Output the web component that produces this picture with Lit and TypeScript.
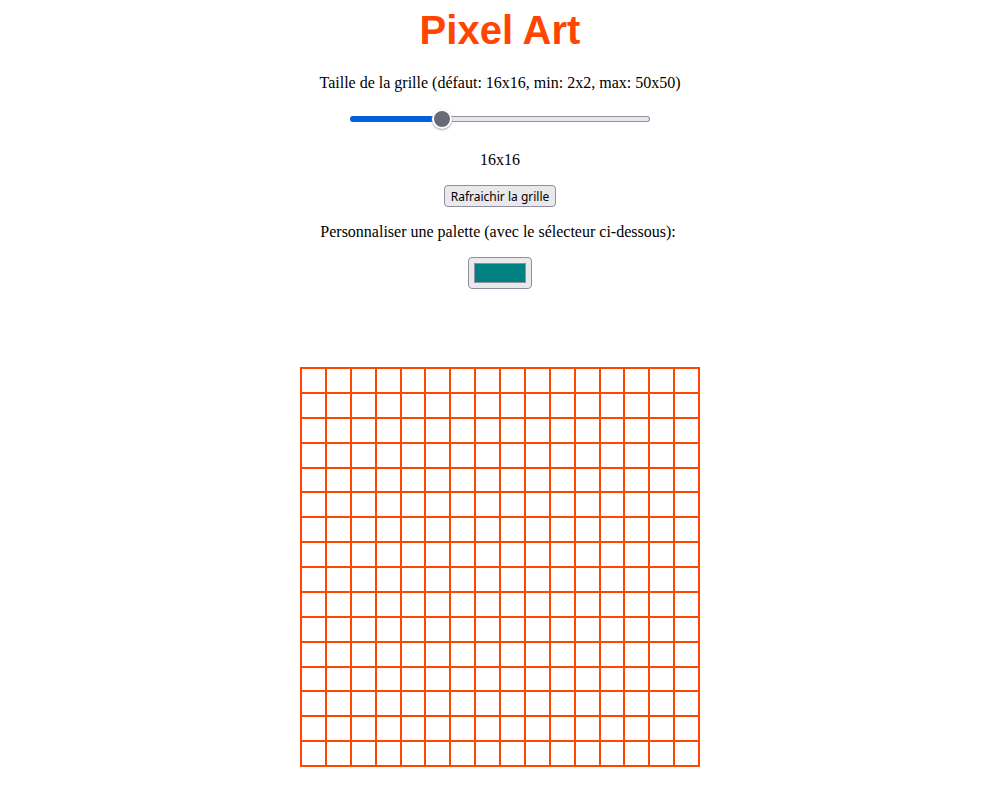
import { LitElement, html, css } from "lit";
import { customElement, state } from "lit/decorators.js";

@customElement("app-root")
export class AppRoot extends LitElement {
  static styles = css`
    :host {
      display: block;
      background: #fff;
      color: #000;
      font: 16px/18px "Liberation Serif", "Times New Roman", serif;
      text-align: center;
    }
    main {
      display: flex;
      flex-direction: column;
      align-items: center;
      padding: 8px 8px 20px;
    }
    h1 {
      margin: 0;
      font: bold 40px/44px "Liberation Sans", Arial, sans-serif;
      color: #ff4500;
    }
    .size-label { margin-top: 22px; }
    .slider {
      appearance: none;
      width: 300px;
      max-width: 100%;
      height: 20px;
      margin: 17px 0 0;
      background: transparent;
    }
    .slider::-webkit-slider-runnable-track {
      box-sizing: border-box;
      height: 6px;
      border: 1px solid transparent;
      border-radius: 3px;
      background:
        linear-gradient(#0060df, #0060df) 0 0 / var(--fill) 100% no-repeat border-box,
        linear-gradient(#e9e9ed, #e9e9ed) padding-box,
        linear-gradient(#8f8f9d, #8f8f9d) border-box;
    }
    .slider::-webkit-slider-thumb {
      appearance: none;
      box-sizing: border-box;
      width: 20px;
      height: 20px;
      margin-top: -8px;
      border: 2px solid #fff;
      border-radius: 50%;
      background: #6a6a77;
      box-shadow: 0 1px 2px #b09aa5;
    }
    .size-value { margin-top: 22px; }
    .refresh {
      box-sizing: border-box;
      height: 22px;
      margin: 16px 0 0;
      padding: 1px 6px 0;
      border: 1px solid #8f8f9d;
      border-radius: 4px;
      background: #e9e9ed;
      color: #000;
      font: 12px/20px "Noto Sans", sans-serif;
    }
    .color-label {
      margin-top: 16px;
      white-space: pre;
    }
    .color {
      appearance: none;
      box-sizing: border-box;
      width: 64px;
      height: 32px;
      margin: 16px 0 0;
      padding: 5px;
      border: 1px solid #8f8f9d;
      border-radius: 4px;
      background: #e9e9ed;
    }
    .color::-webkit-color-swatch-wrapper { padding: 0; }
    .color::-webkit-color-swatch {
      border: 1px solid #8f8f9d;
      border-radius: 0;
    }
    .board {
      display: grid;
      box-sizing: border-box;
      width: 400px;
      max-width: 100%;
      aspect-ratio: 1;
      margin-top: 78px;
      border: 1px solid #ff4500;
    }
    .cell { border: 1px solid #ff4500; }
  `;

  @state() size = 16;
  @state() color = "#008080";
  @state() cells: string[] = Array(256).fill("");

  private resize(e: Event) {
    this.size = Number((e.target as HTMLInputElement).value);
    this.refresh();
  }

  private refresh() {
    this.cells = Array(this.size * this.size).fill("");
  }

  private paint(index: number) {
    this.cells = this.cells.map((c, i) => (i === index ? this.color : c));
  }

  render() {
    const fill = ((this.size - 2) / 48) * 100;
    return html`
      <main>
        <h1>Pixel Art</h1>
        <label class="size-label" for="size">Taille de la grille (défaut: 16x16, min: 2x2, max: 50x50)</label>
        <input class="slider" id="size" type="range" min="2" max="50" .value=${String(this.size)}
          style="--fill: ${fill}%" @input=${this.resize} />
        <output class="size-value" for="size">${this.size}x${this.size}</output>
        <button class="refresh" type="button" @click=${this.refresh}>Rafraichir la grille</button>
        <label class="color-label" for="color">Personnaliser une palette (avec le sélecteur ci-dessous): </label>
        <input class="color" id="color" type="color" .value=${this.color}
          @input=${(e: Event) => (this.color = (e.target as HTMLInputElement).value)} />
        <div class="board" style="grid-template: repeat(${this.size}, 1fr) / repeat(${this.size}, 1fr)">
          ${this.cells.map((c, i) => html`<div class="cell" style="background-color: ${c || "transparent"}" @click=${() => this.paint(i)}></div>`)}
        </div>
      </main>
    `;
  }
}
